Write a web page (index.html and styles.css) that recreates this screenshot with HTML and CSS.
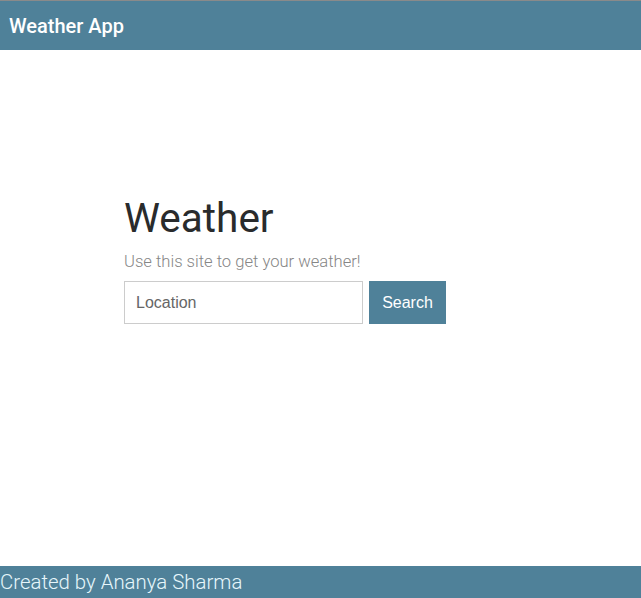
FILE: index.html
```html
<!DOCTYPE html>
<html>
<head>
<meta charset="utf-8">
<link rel="stylesheet" href="styles.css">
</head>
<body>
<div class="page">
  <header class="topbar">
    <span class="brand">Weather App</span>
  </header>
  <main class="content">
    <section class="weather">
      <h1 class="title">Weather</h1>
      <p class="subtitle">Use this site to get your weather!</p>
      <form class="search">
        <input class="location" type="text" placeholder="Location">
        <button class="search-btn" type="button">Search</button>
      </form>
    </section>
  </main>
  <footer class="footer">Created by Ananya Sharma</footer>
</div>
</body>
</html>
```
FILE: styles.css
```css
html, body {
  margin: 0;
  padding: 0;
  height: 100%;
}
body {
  font-family: Roboto, "Liberation Sans", sans-serif;
  background: #ffffff;
}
.page {
  display: flex;
  flex-direction: column;
  height: 100%;
}
.topbar {
  border-top: 1px solid #8a8a8a;
  background: #4f8199;
  height: 49px;
  display: flex;
  align-items: center;
  padding-left: 9px;
}
.brand {
  color: #ffffff;
  font-size: 20px;
  font-weight: 500;
}
.content {
  flex: 1;
  padding: 142px 0 0 124px;
}
.title {
  margin: 0;
  font-size: 40.5px;
  font-weight: 400;
  color: #292b2c;
  line-height: 52px;
}
.subtitle {
  margin: 8px 0 0;
  font-size: 16.6px;
  font-weight: 300;
  color: #868686;
  line-height: 19px;
}
.search {
  display: flex;
  gap: 6px;
  margin-top: 10px;
}
.location {
  width: 239px;
  height: 43px;
  box-sizing: border-box;
  border: 1px solid #cccccc;
  padding: 0 11px;
  font-family: "Liberation Sans", Arial, sans-serif;
  font-size: 16px;
  color: #555;
  outline: none;
}
.location::placeholder {
  color: #666;
}
.search-btn {
  width: 77px;
  height: 43px;
  border: none;
  background: #4f8199;
  color: #ffffff;
  font-family: "Liberation Sans", Arial, sans-serif;
  font-size: 16px;
  padding: 0;
}
.footer {
  background: #4f8199;
  height: 32px;
  color: #e6f6fb;
  font-size: 20.4px;
  font-weight: 300;
  line-height: 32px;
}
```
